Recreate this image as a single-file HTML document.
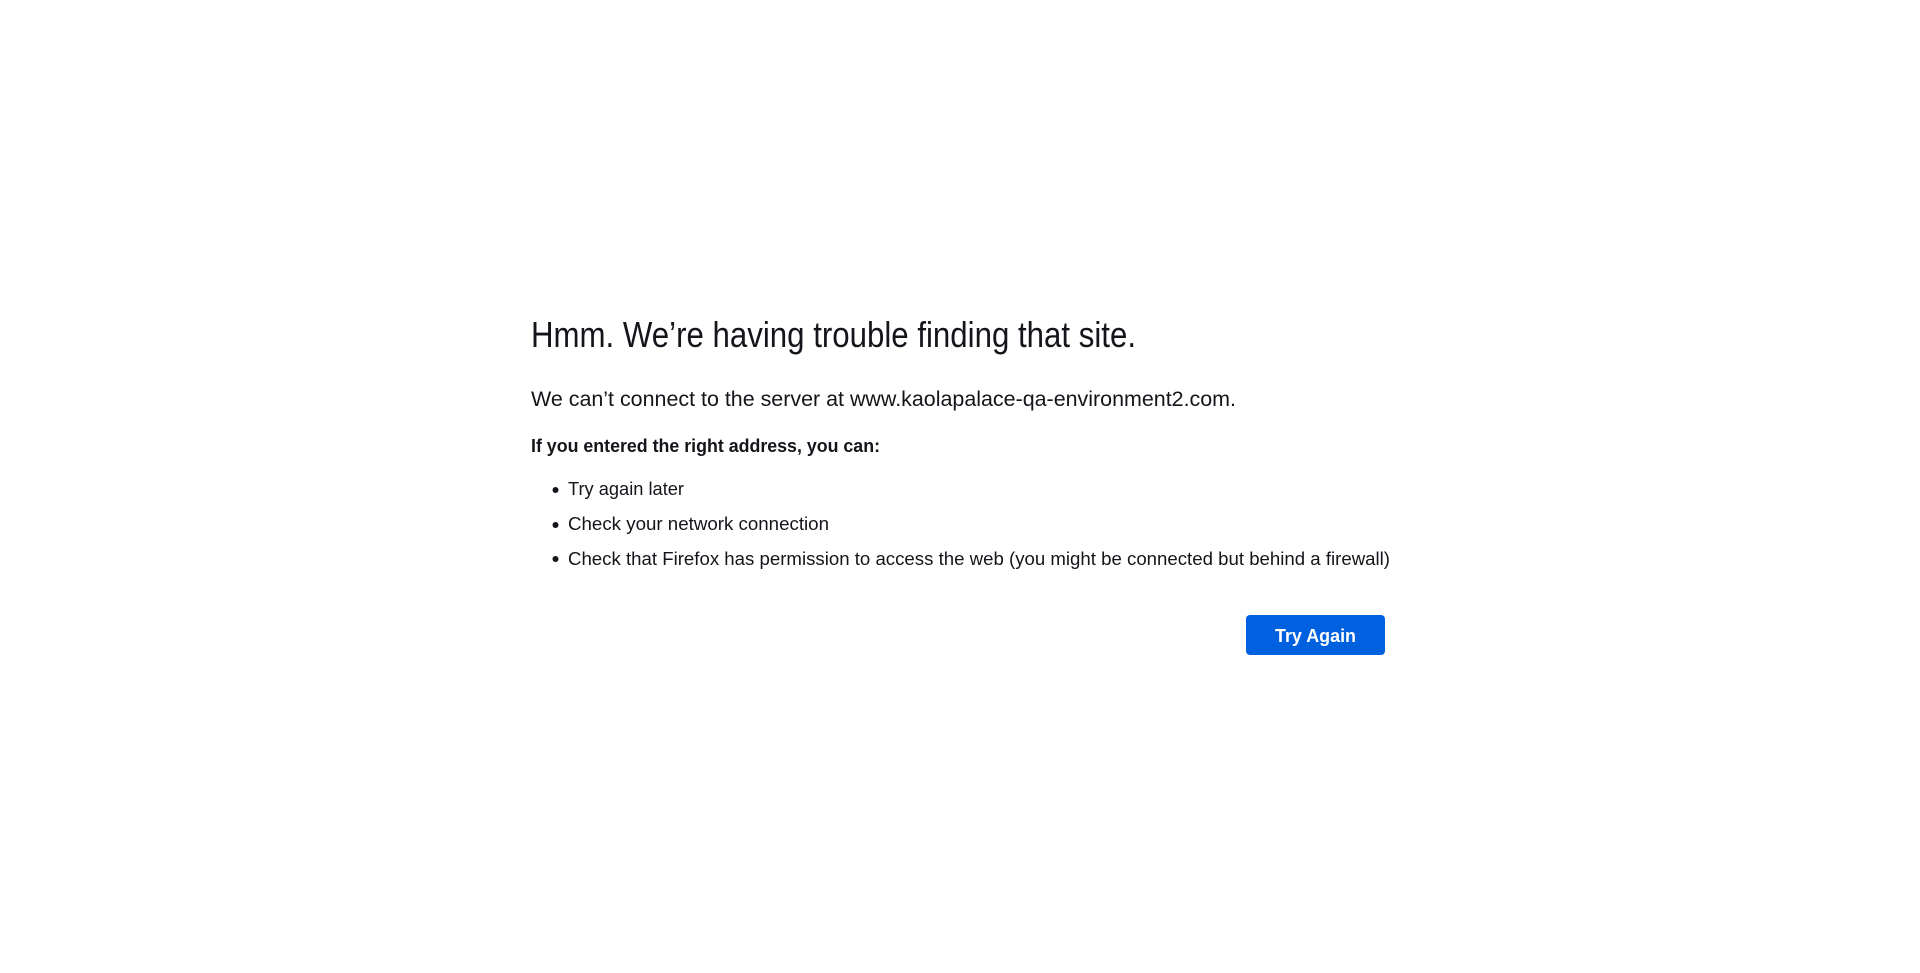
<!DOCTYPE html>
<html><head><meta charset="utf-8"><style>
html,body{margin:0;padding:0;background:#fff;width:1920px;height:973px;overflow:hidden}
svg{display:block}
text{font-family:"Liberation Sans",sans-serif;fill:#15141a}
</style></head><body>
<svg width="1920" height="973" viewBox="0 0 1920 973">
<text x="531" y="347" font-size="36" font-weight="300" textLength="605" lengthAdjust="spacingAndGlyphs">Hmm. We’re having trouble finding that site.</text>
<text x="531" y="406" font-size="21" textLength="705" lengthAdjust="spacingAndGlyphs">We can’t connect to the server at www.kaolapalace-qa-environment2.com.</text>
<text x="531" y="452" font-size="18" font-weight="bold" textLength="349" lengthAdjust="spacingAndGlyphs">If you entered the right address, you can:</text>
<circle cx="555.5" cy="490" r="3" fill="#15141a"/>
<circle cx="555.5" cy="525" r="3" fill="#15141a"/>
<circle cx="555.5" cy="559" r="3" fill="#15141a"/>
<text x="568" y="495" font-size="18" textLength="116" lengthAdjust="spacingAndGlyphs">Try again later</text>
<text x="568" y="530" font-size="18" textLength="261" lengthAdjust="spacingAndGlyphs">Check your network connection</text>
<text x="568" y="565" font-size="18" textLength="822" lengthAdjust="spacingAndGlyphs">Check that Firefox has permission to access the web (you might be connected but behind a firewall)</text>
<rect x="1246" y="615" width="139" height="40" rx="4" fill="#0061e0"/>
<text x="1275" y="642" font-size="18" font-weight="bold" style="fill:#fff" textLength="81" lengthAdjust="spacingAndGlyphs">Try Again</text>
</svg>
</body></html>
